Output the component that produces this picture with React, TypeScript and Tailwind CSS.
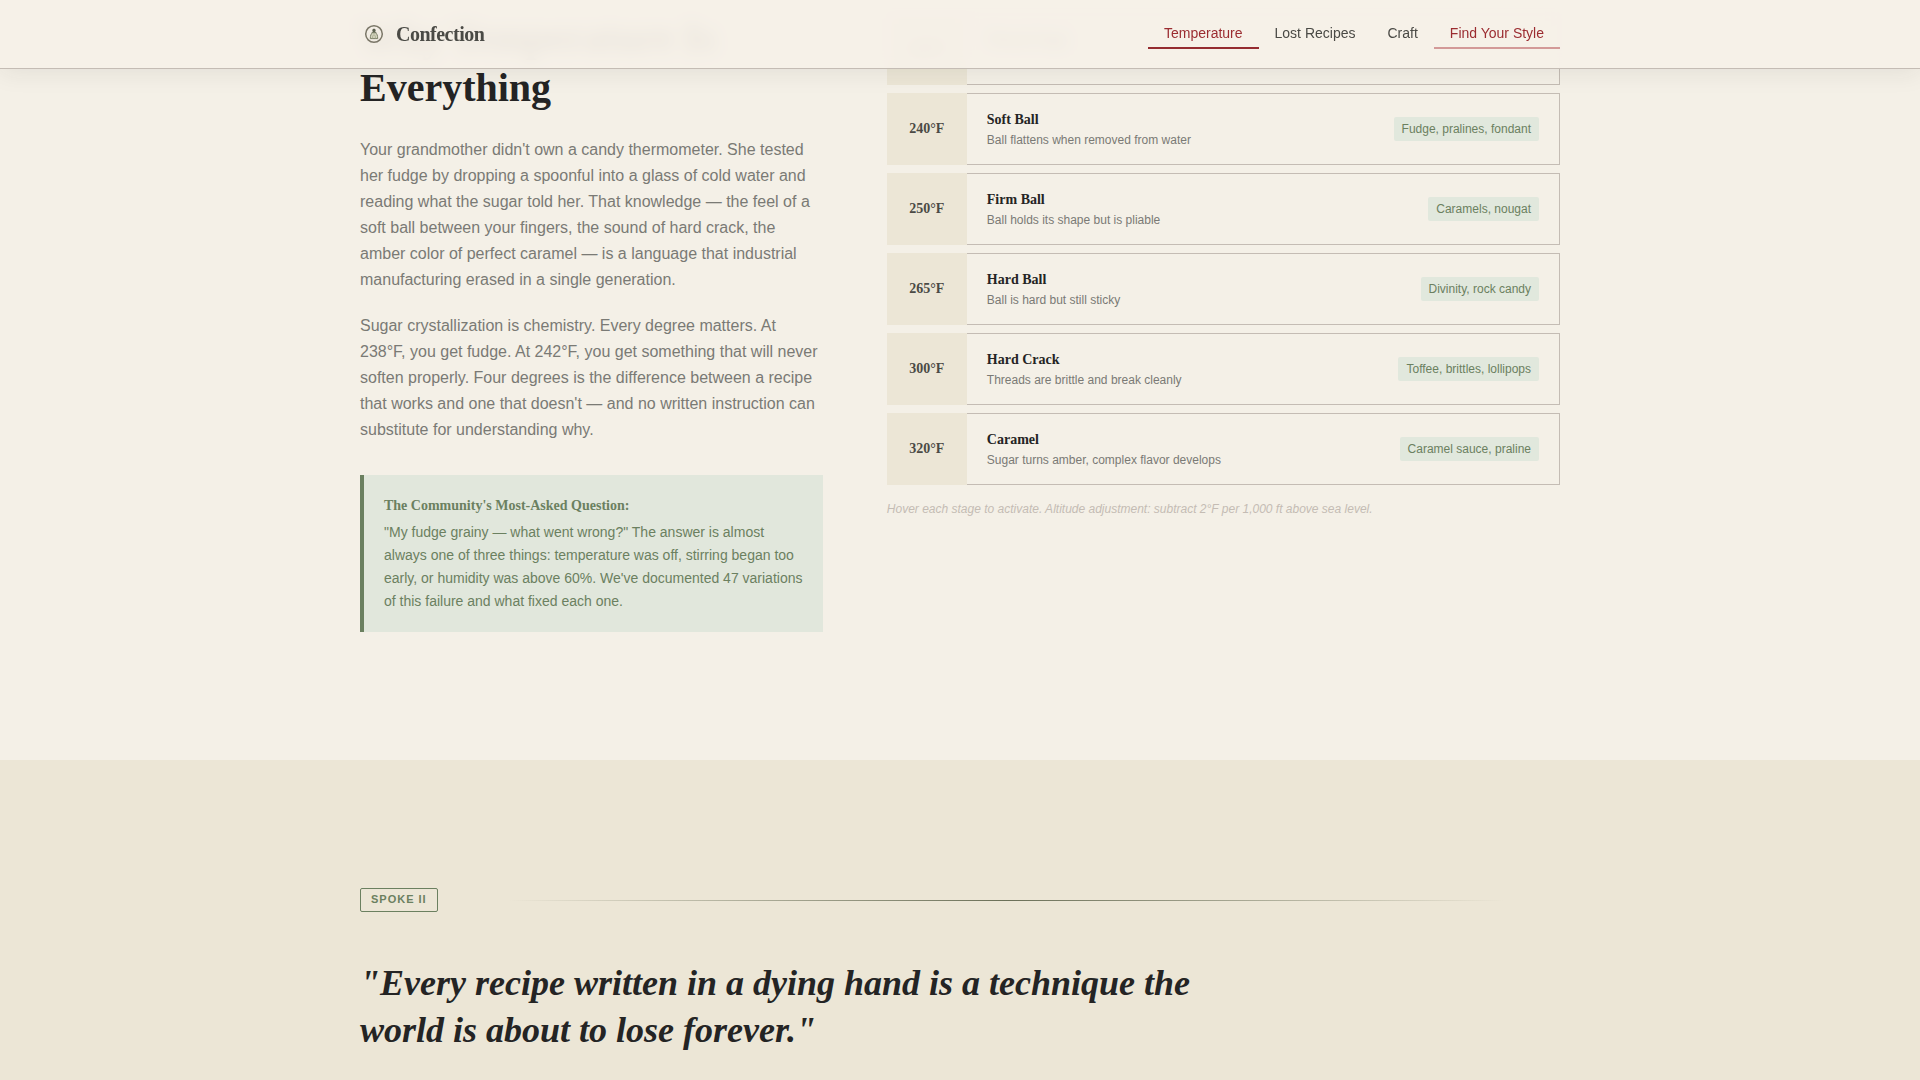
import React from "react";

type Stage = { temp: string; name: string; note: string; uses: string };

const stages: Stage[] = [
  { temp: "230°F", name: "Thread Stage", note: "", uses: "" },
  { temp: "240°F", name: "Soft Ball", note: "Ball flattens when removed from water", uses: "Fudge, pralines, fondant" },
  { temp: "250°F", name: "Firm Ball", note: "Ball holds its shape but is pliable", uses: "Caramels, nougat" },
  { temp: "265°F", name: "Hard Ball", note: "Ball is hard but still sticky", uses: "Divinity, rock candy" },
  { temp: "300°F", name: "Hard Crack", note: "Threads are brittle and break cleanly", uses: "Toffee, brittles, lollipops" },
  { temp: "320°F", name: "Caramel", note: "Sugar turns amber, complex flavor develops", uses: "Caramel sauce, praline" },
];

const serif = "font-['Liberation_Serif',serif]";

function Logo() {
  return (
    <svg className="size-7" viewBox="0 0 28 28" fill="none" aria-hidden="true">
      <circle cx="14" cy="14" r="8.3" stroke="#7b7768" strokeWidth="1.5" />
      <path d="M14 8.800c1 0 1.700.6 1.700 1.500 0 .5-.2.9-.6 1.200l1.700 1.500h-5.600l1.700-1.500c-.4-.3-.6-.7-.6-1.200 0-.9.7-1.500 1.700-1.500z" fill="#5c6150" />
      <path d="M12.300 12.800c-1.300 1.100-2 2.800-2 5.800h7.400c0-3-.7-4.700-2-5.800z" fill="#d3d3bd" stroke="#7d8268" strokeWidth="1" />
      <path d="M12.600 18.400v-1.900c0-.9.500-1.500 1.400-1.500s1.400.6 1.400 1.500v1.900" stroke="#a5a88c" strokeWidth=".8" />
    </svg>
  );
}

function Header() {
  const link = "border-b-2 px-4 py-1 text-sm leading-5";
  return (
    <header className="fixed inset-x-0 top-0 z-10 border-b border-[#c4bcb4] bg-[#f5f0e8]/95 shadow-[0_4px_24px_rgba(44,44,44,0.08)] backdrop-blur-sm">
      <div className="mx-auto flex h-17 max-w-[1200px] items-center justify-between">
        <a href="#top" className={`${serif} flex items-center gap-2 text-xl font-bold tracking-tight text-[#4a4a45]`}>
          <Logo />
          Confection
        </a>
        <nav className="flex items-center">
          <a href="#temperature" className={`${link} border-[#952c30] text-[#9b2c30]`}>Temperature</a>
          <a href="#recipes" className={`${link} border-transparent text-[#4a4a45]`}>Lost Recipes</a>
          <a href="#craft" className={`${link} border-transparent text-[#4a4a45]`}>Craft</a>
          <a href="#style" className={`${link} border-[#d39a98] text-[#9b2c30]`}>Find Your Style</a>
        </nav>
      </div>
    </header>
  );
}

function StageRow({ temp, name, note, uses }: Stage) {
  return (
    <li className="grid min-h-18 grid-cols-[80px_1fr]">
      <div className={`${serif} flex items-center justify-center bg-[#ece6d6] text-sm font-bold text-[#4a4a45]`}>{temp}</div>
      <div className="flex items-center justify-between border border-l-0 border-[#c4bcb4] px-5">
        <div className="min-h-[42px]">
          <h3 className={`${serif} pt-0.5 text-sm leading-5 font-bold text-[#242424]`}>{name}</h3>
          {note && <p className="text-xs leading-5 text-[#7a7a75]">{note}</p>}
        </div>
        {uses && <span className="rounded-xs bg-[#e1e8dd] px-2 py-1 text-xs leading-4 text-[#6b8060]">{uses}</span>}
      </div>
    </li>
  );
}

export default function App() {
  return (
    <div id="top" className="flex min-h-screen flex-col bg-[#f4f0e7] font-['Liberation_Sans',sans-serif]">
      <Header />
      <section id="temperature" className="px-6 pt-[13px] pb-32">
        <div className="mx-auto grid max-w-[1200px] grid-cols-[11fr_16fr] gap-16">
          <div>
            <h2 className={`${serif} text-[40px] leading-[50px] font-bold text-[#242424]`}>
              Why Temperature Is Everything
            </h2>
            <div className="mt-6 space-y-5 text-base leading-[26px] text-[#7a7a75]">
              <p>
                Your grandmother didn't own a candy thermometer. She tested her fudge by dropping a spoonful into a glass of cold
                water and reading what the sugar told her. That knowledge — the feel of a soft ball between your fingers, the
                sound of hard crack, the amber color of perfect caramel — is a language that industrial manufacturing erased in a
                single generation.
              </p>
              <p>
                Sugar crystallization is chemistry. Every degree matters. At 238°F, you get fudge. At 242°F, you get something
                that will never soften properly. Four degrees is the difference between a recipe that works and one that doesn't
                — and no written instruction can substitute for understanding why.
              </p>
            </div>
            <aside className="mt-8 border-l-4 border-[#6b8060] bg-[#e1e7dc] pt-5 pr-4 pb-[19px] pl-5 text-sm text-[#6b8060]">
              <h3 className={`${serif} mb-1 leading-[22px] font-bold`}>The Community's Most-Asked Question:</h3>
              <p className="leading-[23px]">
                "My fudge grainy — what went wrong?" The answer is almost always one of three things: temperature was off,
                stirring began too early, or humidity was above 60%. We've documented 47 variations of this failure and what
                fixed each one.
              </p>
            </aside>
          </div>
          <div>
            <ul className="space-y-2">
              {stages.map((s) => (
                <StageRow key={s.name} {...s} />
              ))}
            </ul>
            <p className="mt-3.5 text-xs leading-5 text-[#c4bcb4] italic">
              Hover each stage to activate. Altitude adjustment: subtract 2°F per 1,000 ft above sea level.
            </p>
          </div>
        </div>
      </section>
      <section id="recipes" className="flex-1 bg-[#ece6d6] px-6 pt-32">
        <div className="mx-auto max-w-[1200px]">
          <div className="flex items-center gap-4">
            <span className="rounded-xs border border-[#6b8060] px-2.5 pt-[3px] pb-[5px] text-[11px] leading-3.5 font-bold tracking-[1px] text-[#6b8060]">
              SPOKE II
            </span>
            <div className="h-px flex-1 bg-linear-to-r from-transparent from-5% via-[#6b7058] to-transparent to-95%" />
          </div>
          <blockquote className={`${serif} mt-12 max-w-[860px] text-4xl leading-[47px] font-bold text-[#242424] italic`}>
            "Every recipe written in a dying hand is a technique the world is about to lose forever."
          </blockquote>
        </div>
      </section>
    </div>
  );
}
